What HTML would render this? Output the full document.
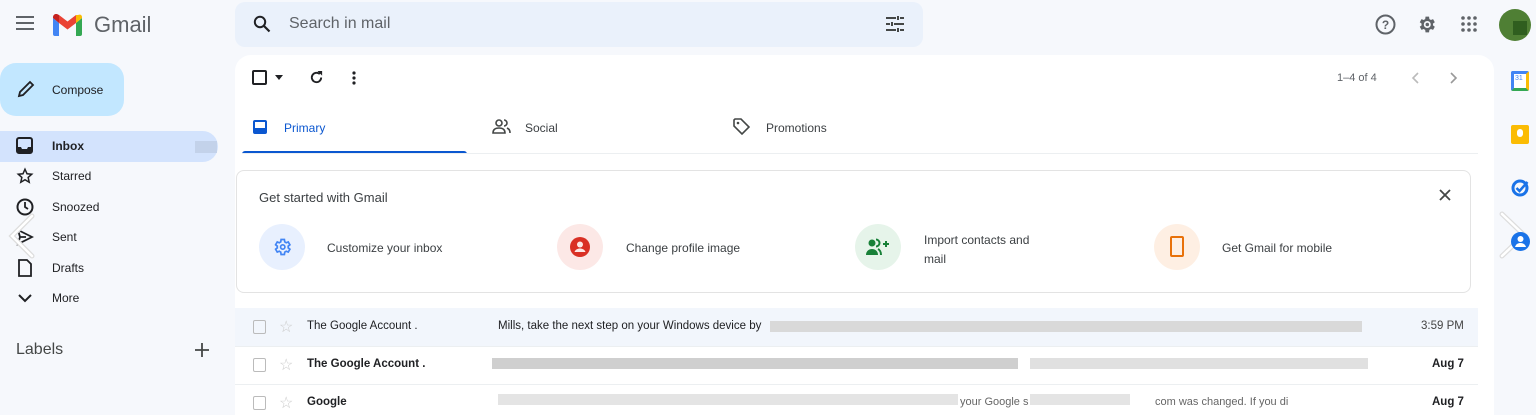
<!DOCTYPE html>
<html><head><meta charset="utf-8">
<style>
*{margin:0;padding:0;box-sizing:border-box}
body{width:1536px;height:404px;overflow:hidden;background:#f6f8fc;font-family:"Liberation Sans",Arial,sans-serif;color:#202124;position:relative}
.a{position:absolute}
.t{font-size:12px;color:#3c4043}
svg{display:block}
.nav{position:absolute;left:0;width:218px;height:30px;font-size:12px;color:#202124}
.nav svg{position:absolute;left:16px;top:6px}
.nav span{position:absolute;left:52px;top:8px}
.blur{position:absolute;height:11px;background:#d6d6d6}
</style></head><body>
<!-- header -->
<svg class="a" style="left:16px;top:16px" width="18" height="14"><rect y="0" width="18" height="2" fill="#5f6368"/><rect y="6" width="18" height="2" fill="#5f6368"/><rect y="12" width="18" height="2" fill="#5f6368"/></svg>
<svg class="a" style="left:53px;top:14px" width="29" height="22" viewBox="0 0 29 22">
<path d="M2 22V5l12 9 12-9v17" fill="none"/>
<path d="M0 4v16a2 2 0 0 0 2 2h4V9z" fill="#4285f4"/>
<path d="M23 22h4a2 2 0 0 0 2-2V4l-6 5z" fill="#34a853"/>
<path d="M23 1v8l6-5V3c0-2-2-3-4-2z" fill="#fbbc04"/>
<path d="M6 9V1l8.5 6.5L23 1v8l-8.5 6.5z" fill="#ea4335"/>
<path d="M0 3v1l6 5V1L4 0C2-.5 0 1 0 3z" fill="#c5221f"/>
</svg>
<div class="a" style="left:94px;top:12px;font-size:22px;color:#5f6368">Gmail</div>
<div class="a" style="left:235px;top:2px;width:688px;height:45px;background:#eaf1fb;border-radius:10px"></div>
<svg class="a" style="left:253px;top:15px" width="18" height="18" viewBox="0 0 18 18"><circle cx="7" cy="7" r="5.2" fill="none" stroke="#202124" stroke-width="2"/><path d="M11 11l5.5 5.5" stroke="#202124" stroke-width="2.2"/></svg>
<div class="a" style="left:289px;top:15px;font-size:16px;color:#5f6368">Search in mail</div>
<svg class="a" style="left:886px;top:16px" width="18" height="16" viewBox="0 0 18 16"><g stroke="#444746" stroke-width="2"><path d="M0 2h10M14 2h4M12 0v4M0 8h4M8 8h10M6 6v4M0 14h10M14 14h4M12 12v4"/></g></svg>
<svg class="a" style="left:1375px;top:14px" width="21" height="21" viewBox="0 0 21 21"><circle cx="10.5" cy="10.5" r="9" fill="none" stroke="#5f6368" stroke-width="2"/><text x="10.5" y="15" text-anchor="middle" font-size="12" font-family="Liberation Sans" font-weight="bold" fill="#5f6368">?</text></svg>
<svg class="a" style="left:1416px;top:14px" width="21" height="21" viewBox="0 0 24 24"><path fill="#5f6368" d="M19.4 13a7.5 7.5 0 0 0 0-2l2.1-1.6-2-3.5-2.5 1a7 7 0 0 0-1.7-1L14.9 3h-4l-.4 2.9a7 7 0 0 0-1.7 1l-2.5-1-2 3.5L6.4 11a7.5 7.5 0 0 0 0 2l-2.1 1.6 2 3.5 2.5-1a7 7 0 0 0 1.7 1l.4 2.9h4l.4-2.9a7 7 0 0 0 1.7-1l2.5 1 2-3.5zM12.9 16a4 4 0 1 1 0-8 4 4 0 0 1 0 8z"/><circle cx="12.9" cy="12" r="2" fill="#5f6368"/></svg>
<svg class="a" style="left:1461px;top:16px" width="16" height="16"><g fill="#5f6368"><circle cx="2" cy="2" r="1.8"/><circle cx="8" cy="2" r="1.8"/><circle cx="14" cy="2" r="1.8"/><circle cx="2" cy="8" r="1.8"/><circle cx="8" cy="8" r="1.8"/><circle cx="14" cy="8" r="1.8"/><circle cx="2" cy="14" r="1.8"/><circle cx="8" cy="14" r="1.8"/><circle cx="14" cy="14" r="1.8"/></g></svg>
<div class="a" style="left:1499px;top:9px;width:32px;height:32px;border-radius:50%;background:#4f7f34;overflow:hidden"><div style="position:absolute;left:14px;top:12px;width:14px;height:14px;background:#2f5e1f"></div></div>

<!-- sidebar -->
<div class="a" style="left:0;top:63px;width:124px;height:53px;background:#c2e7ff;border-radius:16px"></div>
<svg class="a" style="left:17px;top:80px" width="18" height="18" viewBox="0 0 18 18"><path d="M2 16l1-4L13 2l3 3L6 15z" fill="none" stroke="#202124" stroke-width="1.8"/></svg>
<div class="a t" style="left:52px;top:83px;color:#202124">Compose</div>
<div class="a" style="left:0;top:131px;width:218px;height:31px;background:#d3e3fd;border-radius:0 16px 16px 0"></div>
<div class="nav" style="top:131px"><svg width="17" height="17" viewBox="0 0 17 17"><rect x="1" y="1" width="15" height="15" rx="2" fill="none" stroke="#202124" stroke-width="2"/><path d="M1 10h4l1 2h5l1-2h4v6H1z" fill="#202124"/></svg><span style="font-weight:bold">Inbox</span></div>
<div class="a" style="left:195px;top:141px;width:22px;height:12px;background:#c3d2ea"></div>
<div class="nav" style="top:161px"><svg width="18" height="18" viewBox="0 0 24 24"><path d="M12 3l2.7 6 6.3.6-4.8 4.3 1.4 6.4L12 17l-5.6 3.3 1.4-6.4L3 9.6 9.3 9z" fill="none" stroke="#202124" stroke-width="2"/></svg><span>Starred</span></div>
<div class="nav" style="top:192px"><svg width="18" height="18" viewBox="0 0 18 18"><circle cx="9" cy="9" r="7.5" fill="none" stroke="#202124" stroke-width="2"/><path d="M9 4v5l3 2" fill="none" stroke="#202124" stroke-width="1.8"/></svg><span>Snoozed</span></div>
<div class="nav" style="top:222px"><svg width="18" height="18" viewBox="0 0 18 18"><path d="M2 2l14 7-14 7 2-7z M4 9h6" fill="none" stroke="#202124" stroke-width="1.8"/></svg><span>Sent</span></div>
<div class="nav" style="top:253px"><svg width="18" height="18" viewBox="0 0 18 18"><path d="M3 1h8l4 4v12H3z" fill="none" stroke="#202124" stroke-width="1.8"/></svg><span>Drafts</span></div>
<div class="nav" style="top:283px"><svg width="18" height="18" viewBox="0 0 18 18"><path d="M3 6l6 6 6-6" fill="none" stroke="#202124" stroke-width="2"/></svg><span>More</span></div>
<svg class="a" style="left:6px;top:212px" width="30" height="48" viewBox="0 0 30 48"><path d="M26 4L6 24l20 20" fill="none" stroke="#ddd" stroke-width="5" stroke-linecap="round"/><path d="M26 4L6 24l20 20" fill="none" stroke="#fff" stroke-width="2.5" stroke-linecap="round"/></svg>
<div class="a" style="left:16px;top:341px;font-size:16px;color:#444746">Labels</div>
<svg class="a" style="left:195px;top:343px" width="14" height="14"><path d="M7 0v14M0 7h14" stroke="#444746" stroke-width="1.8"/></svg>

<!-- main panel -->
<div class="a" style="left:235px;top:55px;width:1259px;height:360px;background:#fff;border-radius:16px 16px 0 0"></div>
<div class="a" style="left:252px;top:70px;width:15px;height:15px;border:2px solid #202124;border-radius:2px"></div>
<svg class="a" style="left:275px;top:75px" width="8" height="5"><path d="M0 0h8L4 5z" fill="#202124"/></svg>
<svg class="a" style="left:309px;top:70px" width="15" height="15" viewBox="0 0 16 16"><path d="M13 8a5 5 0 1 1-1.5-3.6" fill="none" stroke="#202124" stroke-width="2"/><path d="M9 1h5v5z" fill="#202124"/></svg>
<svg class="a" style="left:352px;top:71px" width="4" height="14"><circle cx="2" cy="2" r="1.6" fill="#202124"/><circle cx="2" cy="7" r="1.6" fill="#202124"/><circle cx="2" cy="12" r="1.6" fill="#202124"/></svg>
<div class="a" style="left:1337px;top:72px;font-size:11px;color:#5f6368">1–4 of 4</div>
<svg class="a" style="left:1411px;top:72px" width="8" height="12"><path d="M7 1L2 6l5 5" fill="none" stroke="#bbb" stroke-width="1.6"/></svg>
<svg class="a" style="left:1450px;top:72px" width="8" height="12"><path d="M1 1l5 5-5 5" fill="none" stroke="#999" stroke-width="1.6"/></svg>

<svg class="a" style="left:253px;top:120px" width="14" height="14" viewBox="0 0 14 14"><rect width="14" height="14" rx="2" fill="#0b57d0"/><rect x="2" y="2" width="10" height="6" fill="#fff"/></svg>
<div class="a" style="left:284px;top:121px;font-size:12px;color:#0b57d0">Primary</div>
<div class="a" style="left:242px;top:151px;width:225px;height:3px;background:#0b57d0;border-radius:3px 3px 0 0"></div>
<div class="a" style="left:242px;top:153px;width:1236px;height:1px;background:#eceff1"></div>
<svg class="a" style="left:492px;top:119px" width="19" height="15" viewBox="0 0 19 15"><circle cx="7" cy="4" r="3" fill="none" stroke="#444746" stroke-width="1.6"/><path d="M1 14c0-4 3-5 6-5s6 1 6 5z" fill="none" stroke="#444746" stroke-width="1.6"/><path d="M12 1a3 3 0 0 1 0 6M15 9c2 1 3 2 3 5" fill="none" stroke="#444746" stroke-width="1.6"/></svg>
<div class="a t" style="left:525px;top:121px">Social</div>
<svg class="a" style="left:733px;top:118px" width="17" height="17" viewBox="0 0 17 17"><path d="M1 2v6l8 8 7-7-8-8H2z" fill="none" stroke="#444746" stroke-width="1.6"/><circle cx="5" cy="5" r="1.3" fill="#444746"/></svg>
<div class="a t" style="left:766px;top:121px">Promotions</div>

<!-- get started card -->
<div class="a" style="left:236px;top:170px;width:1235px;height:123px;border:1px solid #e3e3e3;border-radius:8px"></div>
<div class="a" style="left:259px;top:190px;font-size:13px;color:#3c4043">Get started with Gmail</div>
<svg class="a" style="left:1439px;top:189px" width="12" height="12"><path d="M1 1l10 10M11 1L1 11" stroke="#444746" stroke-width="1.8"/></svg>
<div class="a" style="left:259px;top:224px;width:46px;height:46px;border-radius:50%;background:#e8f0fe"></div>
<svg class="a" style="left:272px;top:237px" width="20" height="20" viewBox="0 0 24 24"><path fill="none" stroke="#4285f4" stroke-width="2" d="M19.4 13a7.5 7.5 0 0 0 0-2l2.1-1.6-2-3.5-2.5 1a7 7 0 0 0-1.7-1L14.9 3h-4l-.4 2.9a7 7 0 0 0-1.7 1l-2.5-1-2 3.5L6.4 11a7.5 7.5 0 0 0 0 2l-2.1 1.6 2 3.5 2.5-1a7 7 0 0 0 1.7 1l.4 2.9h4l.4-2.9a7 7 0 0 0 1.7-1l2.5 1 2-3.5z"/><circle cx="12.9" cy="12" r="2.6" fill="none" stroke="#4285f4" stroke-width="2"/></svg>
<div class="a t" style="left:327px;top:241px">Customize your inbox</div>
<div class="a" style="left:557px;top:224px;width:46px;height:46px;border-radius:50%;background:#fce8e6"></div>
<svg class="a" style="left:570px;top:237px" width="20" height="20" viewBox="0 0 20 20"><circle cx="10" cy="10" r="10" fill="#d93025"/><circle cx="10" cy="7.5" r="3" fill="#fce8e6"/><path d="M4.5 15c1-2.5 3-3.5 5.5-3.5s4.5 1 5.5 3.5z" fill="#fce8e6"/></svg>
<div class="a t" style="left:626px;top:241px">Change profile image</div>
<div class="a" style="left:855px;top:224px;width:46px;height:46px;border-radius:50%;background:#e6f4ea"></div>
<svg class="a" style="left:866px;top:238px" width="24" height="18" viewBox="0 0 24 18"><circle cx="6" cy="5" r="3.5" fill="#188038"/><path d="M0 17c0-4 3-6 6-6s6 2 6 6z" fill="#188038"/><path d="M10 1.5a3.5 3.5 0 0 1 0 7M12 11c2 1 3 3 3 6" fill="none" stroke="#188038" stroke-width="2"/><path d="M20 3v6M17 6h6" stroke="#188038" stroke-width="2"/></svg>
<div class="a t" style="left:924px;top:231px;line-height:19px">Import contacts and<br>mail</div>
<div class="a" style="left:1154px;top:224px;width:46px;height:46px;border-radius:50%;background:#feefe3"></div>
<div class="a" style="left:1170px;top:236px;width:14px;height:21px;border:2.5px solid #e8710a;border-radius:2px"></div>
<div class="a t" style="left:1222px;top:241px">Get Gmail for mobile</div>

<!-- rows -->
<div class="a" style="left:235px;top:308px;width:1243px;height:38px;background:#f2f6fc"></div>
<div class="a" style="left:235px;top:346px;width:1243px;height:1px;background:#eceff1"></div>
<div class="a" style="left:235px;top:384px;width:1243px;height:1px;background:#eceff1"></div>

<div class="a" style="left:253px;top:320px;width:13px;height:14px;border:1.5px solid #bbb;border-radius:2px"></div>
<div class="a" style="left:279px;top:317px;font-size:16px;color:#ccc">☆</div>
<div class="a" style="left:307px;top:320px;font-size:11.5px;color:#202124">The Google Account .</div>
<div class="a" style="left:498px;top:320px;font-size:11.5px;color:#202124">Mills, take the next step on your Windows device by</div>
<div class="blur" style="left:770px;top:321px;width:592px;background:#d9d9d9"></div>
<div class="a" style="left:1421px;top:320px;font-size:11.5px;color:#444">3:59 PM</div>

<div class="a" style="left:253px;top:358px;width:13px;height:14px;border:1.5px solid #bbb;border-radius:2px"></div>
<div class="a" style="left:279px;top:355px;font-size:16px;color:#ccc">☆</div>
<div class="a" style="left:307px;top:358px;font-size:11.5px;color:#202124;font-weight:bold">The Google Account .</div>
<div class="blur" style="left:492px;top:358px;width:526px;background:#cfcfcf"></div>
<div class="blur" style="left:1030px;top:358px;width:338px;background:#e0e0e0"></div>
<div class="a" style="left:1432px;top:358px;font-size:11.5px;color:#202124;font-weight:bold">Aug 7</div>

<div class="a" style="left:253px;top:396px;width:13px;height:14px;border:1.5px solid #bbb;border-radius:2px"></div>
<div class="a" style="left:279px;top:393px;font-size:16px;color:#ccc">☆</div>
<div class="a" style="left:307px;top:396px;font-size:11.5px;color:#202124;font-weight:bold">Google</div>
<div class="blur" style="left:498px;top:394px;width:460px;background:#e4e4e4"></div>
<div class="a" style="left:960px;top:396px;font-size:11px;color:#666">your Google s</div>
<div class="blur" style="left:1030px;top:394px;width:100px;background:#e4e4e4"></div>
<div class="a" style="left:1155px;top:396px;font-size:11px;color:#666">com was changed. If you di</div>
<div class="a" style="left:1432px;top:396px;font-size:11.5px;color:#202124;font-weight:bold">Aug 7</div>

<!-- right side apps -->
<div class="a" style="left:1511px;top:71px;width:18px;height:20px;border-radius:2px;background:#fff;border:3px solid #4285f4;border-right-color:#fbbc04;border-bottom-color:#34a853"></div>
<div class="a" style="left:1515px;top:75px;font-size:7px;color:#4285f4">31</div>
<div class="a" style="left:1511px;top:125px;width:18px;height:19px;border-radius:2px;background:#fbbc04"></div>
<div class="a" style="left:1517px;top:129px;width:6px;height:8px;border-radius:3px;background:#fff"></div>
<svg class="a" style="left:1511px;top:178px" width="19" height="19" viewBox="0 0 19 19"><circle cx="9" cy="10" r="7" fill="none" stroke="#1a73e8" stroke-width="3"/><path d="M5.5 10l3 3 8-9" fill="none" stroke="#1a73e8" stroke-width="2.5"/></svg>
<svg class="a" style="left:1497px;top:210px" width="39" height="50" viewBox="0 0 39 50"><path d="M5 4l22 21-22 21" fill="none" stroke="#ddd" stroke-width="5" stroke-linecap="round"/><path d="M5 4l22 21-22 21" fill="none" stroke="#fff" stroke-width="2.5" stroke-linecap="round"/></svg>
<svg class="a" style="left:1511px;top:232px" width="19" height="19" viewBox="0 0 19 19"><circle cx="9.5" cy="9.5" r="9.5" fill="#1a73e8"/><circle cx="9.5" cy="7" r="3" fill="#fff"/><path d="M4 15c1-3 3-4 5.5-4s4.5 1 5.5 4z" fill="#fff"/></svg>
</body></html>
